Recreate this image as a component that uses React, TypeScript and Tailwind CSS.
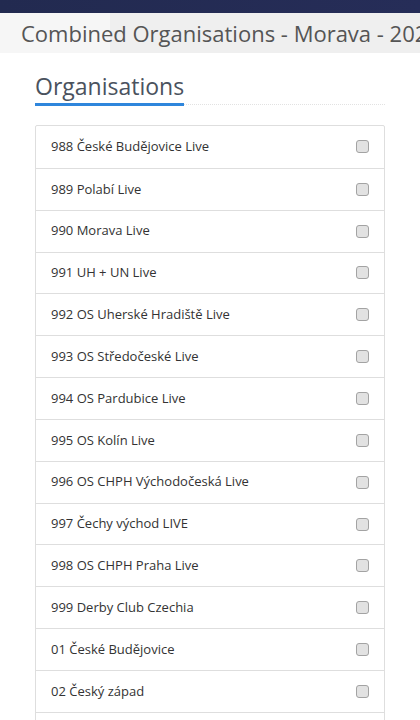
import React from "react"

// Organisations shown in the list
const organisations = [
  "988 České Budějovice Live",
  "989 Polabí Live",
  "990 Morava Live",
  "991 UH + UN Live",
  "992 OS Uherské Hradiště Live",
  "993 OS Středočeské Live",
  "994 OS Pardubice Live",
  "995 OS Kolín Live",
  "996 OS CHPH Východočeská Live",
  "997 Čechy východ LIVE",
  "998 OS CHPH Praha Live",
  "999 Derby Club Czechia",
  "01 České Budějovice",
  "02 Český západ",
]

function OrgRow({ name, first }: { name: string; first: boolean }) {
  return (
    <div
      className={`flex h-[41.85px] items-center justify-between px-[15px] ${
        first ? "" : "border-t border-[#dedede]"
      }`}
    >
      <span className="text-[13px] text-[#333]">{name}</span>
      <span className="h-[13px] w-[13px] rounded-[3px] border border-[#a3a3a3] bg-[#e2e2e2]" />
    </div>
  )
}

export default function App() {
  return (
    <div className="h-screen overflow-hidden bg-white font-['Open_Sans',sans-serif]">
      {/* Top nav strip */}
      <div className="h-[13px] bg-[linear-gradient(to_right,#222a50,#262d58)]" />

      {/* Page title band */}
      <div className="h-[40px] overflow-hidden whitespace-nowrap bg-[linear-gradient(to_right,#f6f6f6_110px,#efefef_110px)] px-[21px] text-[22px] leading-[40px] text-[#555]">
        Combined Organisations - Morava - 2024
      </div>

      <div className="px-[35px]">
        {/* Section heading */}
        <div className="mt-[18px] flex items-end">
          <span className="border-b-[3px] border-[#2f86dc] pb-[2px] text-[23px] leading-[30px] text-[#4a525e]">
            Organisations
          </span>
          <div className="mb-[1px] flex-1 border-b border-dotted border-[#e2e2e2]" />
        </div>

        {/* Organisation list */}
        <div className="mt-[19px] rounded-[2px] border border-[#dedede]">
          {organisations.map((name, i) => (
            <OrgRow key={name} name={name} first={i === 0} />
          ))}
          <div className="h-[41.85px] border-t border-[#dedede]" />
        </div>
      </div>
    </div>
  )
}
